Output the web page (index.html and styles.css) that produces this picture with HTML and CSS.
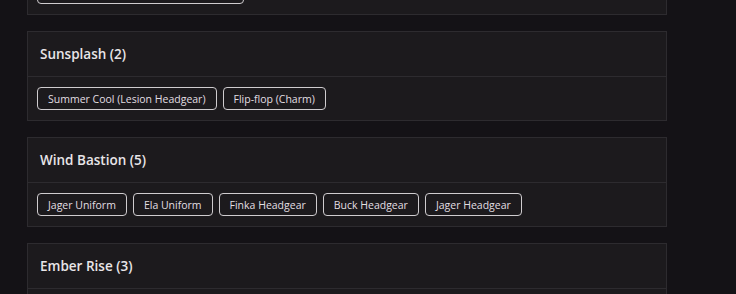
FILE: index.html
```html
<!DOCTYPE html>
<html lang="en">
<head>
<meta charset="utf-8">
<title>Seasons</title>
<link rel="stylesheet" href="styles.css">
</head>
<body>
<main class="list">
  <section class="card">
    <div class="card-header">Grim Sky (1)</div>
    <div class="card-body">
      <span class="tag">Shooting Star (Mira Headgear Bundle)</span>
    </div>
  </section>
  <section class="card">
    <div class="card-header">Sunsplash (2)</div>
    <div class="card-body">
      <span class="tag">Summer Cool (Lesion Headgear)</span>
      <span class="tag">Flip-flop (Charm)</span>
    </div>
  </section>
  <section class="card">
    <div class="card-header">Wind Bastion (5)</div>
    <div class="card-body">
      <span class="tag">Jager Uniform</span>
      <span class="tag">Ela Uniform</span>
      <span class="tag">Finka Headgear</span>
      <span class="tag">Buck Headgear</span>
      <span class="tag">Jager Headgear</span>
    </div>
  </section>
  <section class="card">
    <div class="card-header">Ember Rise (3)</div>
    <div class="card-body">
      <span class="tag">Amaru Uniform</span>
      <span class="tag">Goyo Headgear</span>
      <span class="tag">Ember Charm</span>
    </div>
  </section>
</main>
</body>
</html>
```
FILE: styles.css
```css
html, body {
  margin: 0;
  padding: 0;
  background: #141216;
  font-family: "Open Sans", "Noto Sans", sans-serif;
  color: #e6e3e6;
}

.list {
  width: 640px;
  margin-left: 27px;
  margin-top: -75px;
}

.card {
  background: #1c1a1d;
  border: 1px solid #2d2b2f;
  margin-bottom: 16px;
}

.card-header {
  height: 44px;
  display: flex;
  align-items: center;
  padding: 0 12px;
  border-bottom: 1px solid #2d2b2f;
  font-size: 13.5px;
  font-weight: 600;
  color: #e8e5e8;
}

.card-body {
  display: flex;
  flex-wrap: wrap;
  gap: 6px;
  padding: 10px 9px;
}

.tag {
  box-sizing: border-box;
  height: 23px;
  display: inline-flex;
  align-items: center;
  padding: 0 10px;
  border: 1px solid #cfcccf;
  border-radius: 4px;
  font-size: 10.5px;
  color: #e2dfe2;
  white-space: nowrap;
}
```
